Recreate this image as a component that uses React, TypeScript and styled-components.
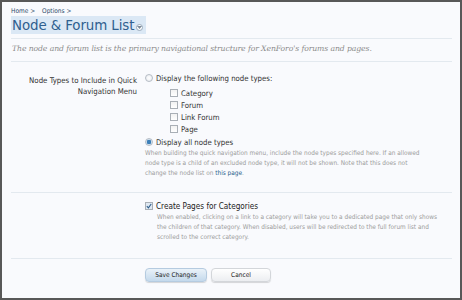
import React from "react";
import styled, { createGlobalStyle } from "styled-components";

const Global = createGlobalStyle`
  html, body { margin: 0; padding: 0; }
  body { background: #fff; }
  * { box-sizing: border-box; }
`;

const Frame = styled.div`
  width: 462px;
  height: 300px;
  border: 2px solid #585858;
  background: #f9fafd;
  padding: 0 8px 0 9px;
  font-family: "DejaVu Sans Condensed", "DejaVu Sans", sans-serif;
  color: #333;
  overflow: hidden;
`;

const Breadcrumb = styled.div`
  display: flex;
  gap: 7px;
  padding-top: 4px;
  font-size: 6.5px;
  color: #2c4a6b;
  height: 13px;
  align-items: center;
`;

const TitleRow = styled.div`
  display: flex;
  align-items: center;
  padding-top: 1px;
`;

const Title = styled.h1`
  margin: 0;
  display: inline-flex;
  align-items: center;
  gap: 2px;
  background: #dbe8f5;
  padding: 0 3px 0 1px;
  height: 18px;
  font-size: 14.9px;
  font-weight: normal;
  font-family: "DejaVu Sans Condensed", "DejaVu Sans", sans-serif;
  color: #2f5f8f;
  letter-spacing: -0.1px;
`;

const Caret = styled.span`
  display: inline-flex;
  width: 7px;
  height: 7px;
  border-radius: 50%;
  border: 1px solid #9ab;
  background: #fff;
  align-items: center;
  justify-content: center;
  margin-top: 4px;
`;

const Rule = styled.div`
  height: 1px;
  background: #e3e9ef;
`;

const Spacer = styled.div<{ $h: number }>`
  height: ${(p) => p.$h}px;
`;

const Description = styled.p`
  margin: 0;
  padding: 5px 0 8px 1px;
  font-family: "DejaVu Serif", "Liberation Serif", serif;
  font-style: italic;
  font-size: 7.7px;
  line-height: 9px;
  color: #8c8c8c;
  letter-spacing: -0.1px;
`;

const FormRow = styled.div`
  display: grid;
  grid-template-columns: 126px 1fr;
  column-gap: 8px;
  padding: 10px 0 14px 0;
`;

const Label = styled.div`
  text-align: right;
  font-size: 7.8px;
  line-height: 11px;
  color: #333;
  padding-top: 3px;
  padding-left: 10px;
`;

const Controls = styled.div`
  display: flex;
  flex-direction: column;
`;

const Choice = styled.label<{ $indent?: number; $after?: number }>`
  display: flex;
  align-items: center;
  gap: 3px;
  height: 12px;
  font-size: 7.75px;
  color: #333;
  padding-left: ${(p) => p.$indent ?? 0}px;
  margin-bottom: ${(p) => p.$after ?? 0}px;
`;

const Radio = styled.span<{ $on?: boolean }>`
  width: 8px;
  height: 8px;
  border-radius: 50%;
  border: 1px solid #b5bcc5;
  background: ${(p) =>
    p.$on
      ? "radial-gradient(circle, #3d7fb8 0 2px, #cfe0ef 2.5px)"
      : "radial-gradient(circle, #fff, #e6e9ee)"};
  flex: none;
`;

const Box = styled.span<{ $on?: boolean }>`
  width: 8px;
  height: 8px;
  border: 1px solid #a9afb6;
  background: ${(p) => (p.$on ? "#dfe8f2" : "linear-gradient(#f2f2f2, #fff)")};
  flex: none;
  display: inline-flex;
  align-items: center;
  justify-content: center;
`;

const Explain = styled.div<{ $indent?: number }>`
  font-size: 6.45px;
  line-height: 10px;
  color: #9c9c9c;
  white-space: nowrap;
  padding-left: ${(p) => p.$indent ?? 0}px;
`;

const Link = styled.a`
  color: #2a5f8c;
  text-decoration: none;
`;

const SingleRow = styled.div`
  display: grid;
  grid-template-columns: 126px 1fr;
  column-gap: 8px;
  padding: 7px 0 16px 0;
`;

const BigChoice = styled(Choice)`
  font-size: 8.15px;
  color: #222;
`;

const ButtonRow = styled.div`
  display: flex;
  gap: 4px;
  padding: 9px 0 0 134px;
`;

const Button = styled.button<{ $primary?: boolean }>`
  height: 14px;
  width: ${(p) => (p.$primary ? 62 : 60)}px;
  border-radius: 4px;
  border: 1px solid ${(p) => (p.$primary ? "#b5cbe0" : "#d3d6da")};
  background: ${(p) =>
    p.$primary ? "linear-gradient(#eaf2f9, #c4d9ec)" : "linear-gradient(#ffffff, #eceef1)"};
  box-shadow: 0 1px 1px rgba(0, 0, 0, 0.15);
  font-family: "DejaVu Sans Condensed", "DejaVu Sans", sans-serif;
  font-size: 6.5px;
  color: #222;
  padding: 0;
`;

export default function App() {
  return (
    <>
      <Global />
      <Frame>
        <Breadcrumb>
          <span>Home &gt;</span>
          <span>Options &gt;</span>
        </Breadcrumb>
        <TitleRow>
          <Title>
            Node &amp; Forum List
            <Caret>
              <svg width="5" height="3" viewBox="0 0 5 3">
                <path d="M0 0 L5 0 L2.5 3 Z" fill="#7a8a9a" />
              </svg>
            </Caret>
          </Title>
        </TitleRow>
        <Spacer $h={4} />
        <Rule />
        <Description>
          The node and forum list is the primary navigational structure for XenForo's forums and pages.
        </Description>
        <Rule />
        <FormRow>
          <Label>Node Types to Include in Quick Navigation Menu</Label>
          <Controls>
            <Choice $after={3}>
              <Radio />
              Display the following node types:
            </Choice>
            <Choice $indent={25}>
              <Box />
              Category
            </Choice>
            <Choice $indent={25}>
              <Box />
              Forum
            </Choice>
            <Choice $indent={25}>
              <Box />
              Link Forum
            </Choice>
            <Choice $indent={25} $after={1}>
              <Box />
              Page
            </Choice>
            <Choice>
              <Radio $on />
              Display all node types
            </Choice>
            <Explain>
              When building the quick navigation menu, include the node types specified here. If an allowed
              <br />
              node type is a child of an excluded node type, it will not be shown. Note that this does not
              <br />
              change the node list on <Link>this page</Link>.
            </Explain>
          </Controls>
        </FormRow>
        <Rule />
        <SingleRow>
          <div />
          <Controls>
            <BigChoice>
              <Box $on>
                <svg width="6" height="6" viewBox="0 0 6 6">
                  <path d="M0.8 3.2 L2.4 4.8 L5.2 1" stroke="#2d5c8a" strokeWidth="1.1" fill="none" />
                </svg>
              </Box>
              Create Pages for Categories
            </BigChoice>
            <Explain $indent={12}>
              When enabled, clicking on a link to a category will take you to a dedicated page that only shows
              <br />
              the children of that category. When disabled, users will be redirected to the full forum list and
              <br />
              scrolled to the correct category.
            </Explain>
          </Controls>
        </SingleRow>
        <Rule />
        <ButtonRow>
          <Button $primary>Save Changes</Button>
          <Button>Cancel</Button>
        </ButtonRow>
      </Frame>
    </>
  );
}
